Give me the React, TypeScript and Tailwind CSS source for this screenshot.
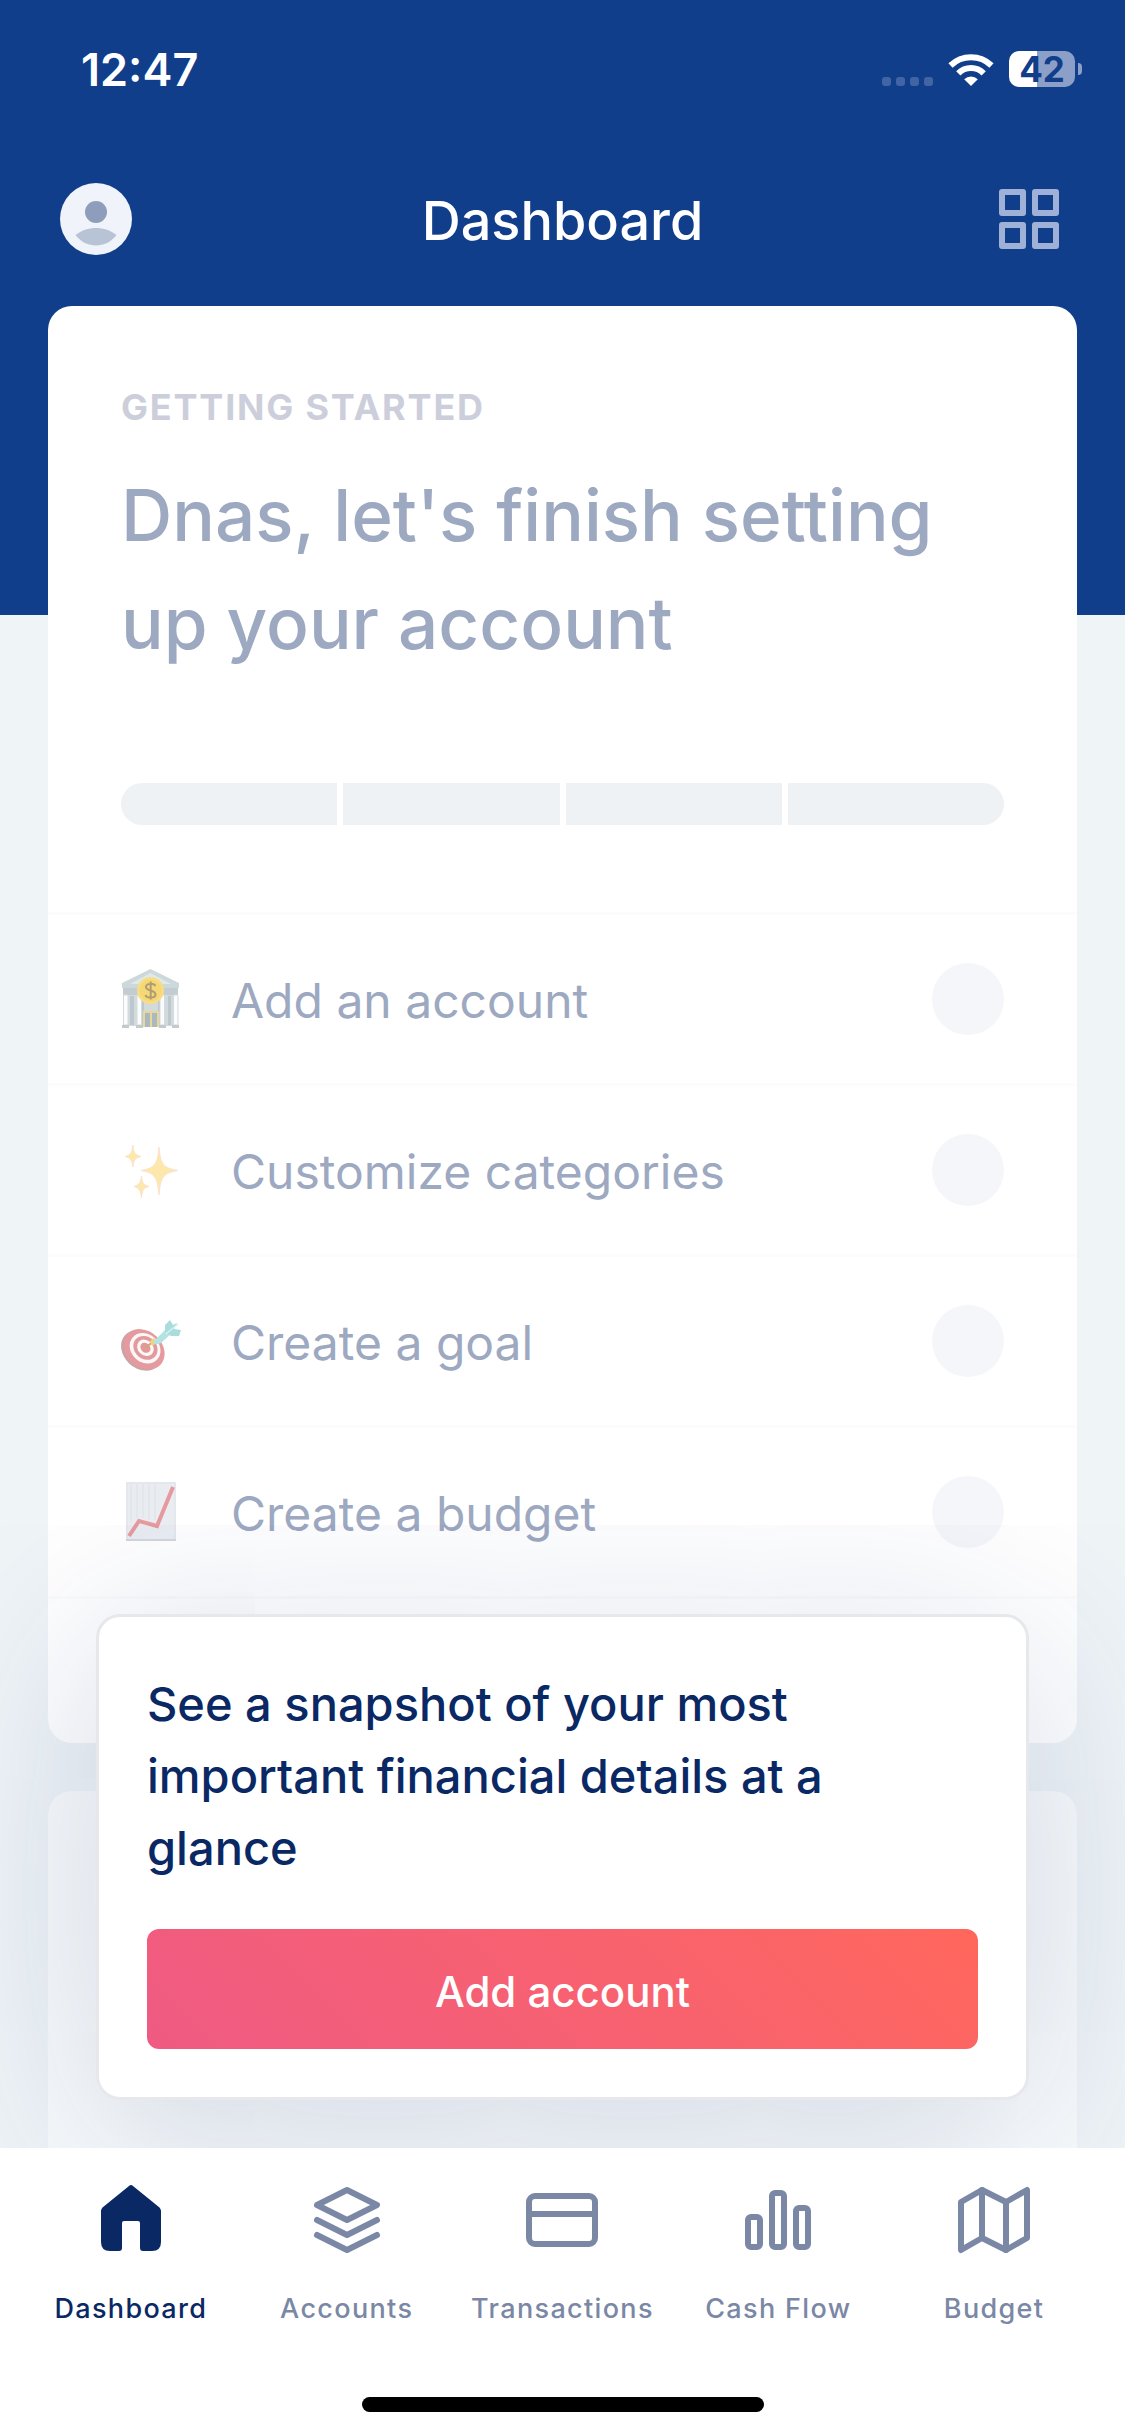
import React, { useState } from "react";

interface Task {
  label: string;
  icon: React.ReactNode;
}

interface Tab {
  label: string;
  icon: React.ReactNode;
}

function WifiIcon() {
  return <svg viewBox="0 0 46 33" className="h-[33px] w-[46px]" fill="none" stroke="white" strokeWidth="6">
      <path d="M2.5 12.5A29.500 29.500 0 0 1 43.500 12.500" />
      <path d="M10.300 20.300A18 18 0 0 1 35.700 20.300" />
      <path d="M23 33 16.200 26.200A10 10 0 0 1 29.800 26.200Z" fill="white" stroke="none" />
    </svg>;
}

function AvatarIcon() {
  return <svg viewBox="0 0 72 72" className="size-[72px]">
      <circle cx="36" cy="36" r="36" fill="#f0f3f9" />
      <circle cx="36" cy="29" r="11" fill="#8f9dbc" />
      <path d="M15.500 52C27 42.500 45 42.500 56.500 52C46 66 26 66 15.500 52Z" fill="#b8c3d5" />
    </svg>;
}

function GridIcon() {
  return <svg viewBox="0 0 60 60" className="size-[60px]" fill="none" stroke="#9fb1d6" strokeWidth="6" strokeLinejoin="round">
      <rect x="3" y="3" width="21" height="21" />
      <rect x="36" y="3" width="21" height="21" />
      <rect x="3" y="36" width="21" height="21" />
      <rect x="36" y="36" width="21" height="21" />
    </svg>;
}

function BankIcon() {
  return <svg viewBox="0 0 60 60" className="size-[60px]">
      <path d="M5 22H54V57H5Z" fill="#d3dadd" />
      <path d="M29.500 0 58 14V19H1V14Z" fill="#cdd8da" />
      <path d="M29.500 4 50 15H9Z" fill="#e0e9e9" />
      <path d="M2 19H57V26H2Z" fill="#c3cdd1" />
      <path d="M9 27H13V56H9ZM21 27H23V56H21ZM37 27H39V56H37ZM47 27H50V56H47Z" fill="#bcc8cd" />
      <g fill="#fbfcfd" stroke="#d5dadf" strokeWidth="1">
        <path d="M2.500 26H7V56H2.500ZM16 26H20.500V56H16ZM39 26H43.500V56H39ZM52.500 26H57V56H52.500Z" />
      </g>
      <path d="M22 42H38V58H22Z" fill="#e9d797" />
      <path d="M24 44H29V58H24ZM31 44H36V58H31Z" fill="#aab9c0" />
      <path d="M1 56H8V59H1ZM15 56H22V59H15ZM38 56H45V59H38ZM51 56H58V59H51Z" fill="#c3c9cd" />
      <circle cx="29.500" cy="21.500" r="13.500" fill="#f7dd84" />
      <circle cx="29.500" cy="21.500" r="11" fill="#f5d875" />
      <path d="M34.500 17C33 14 25 14 25 18C25 22.500 34.500 20.500 34.500 25.500C34.500 29.500 25.500 29.500 24.500 26M29.700 12.500V30.500" fill="none" stroke="#af9c74" strokeWidth="2" />
    </svg>;
}

function SparklesIcon() {
  return <svg viewBox="0 0 60 60" className="size-[60px]" fill="#fde8ac" stroke="#fce2cc" strokeWidth="1">
      <path d="M38 7C39.500 24 42 28 57 30.500C42 33 39.500 37 38 55C36.500 37 34 33 20 30.500C34 28 36.500 24 38 7Z" />
      <path d="M12 5C12.500 13 14 15 20 16.500C14 18 12.500 20 12 27C11 20 9.500 18 4 16.500C9.500 15 11 13 12 5Z" />
      <path d="M20.500 36C21 43 22.500 45 28 46.500C22.500 48 21 50 20.500 58C19.500 50 18 48 13 46.500C18 45 19.500 43 20.500 36Z" />
    </svg>;
}

function TargetIcon() {
  return <svg viewBox="0 0 60 60" className="size-[60px]">
      <g transform="rotate(43 22 38)">
        <ellipse cx="22" cy="40" rx="22.500" ry="18" fill="#c9a3a6" />
        <ellipse cx="23" cy="37.500" rx="22.500" ry="18" fill="#e59a9f" />
        <ellipse cx="23" cy="36" rx="16.500" ry="14" fill="#fdf8f8" />
        <ellipse cx="23" cy="35.500" rx="13" ry="11" fill="#e39a9e" />
        <ellipse cx="23" cy="35.500" rx="9" ry="7.500" fill="#fdf8f8" />
        <ellipse cx="23" cy="35.500" rx="5.500" ry="4.500" fill="#e09a98" />
      </g>
      <path d="M25 36 32 31" stroke="#d9a07c" strokeWidth="2" />
      <path d="M29 30 33 27 36 32 31 35Z" fill="#f3d37c" />
      <path d="M32 31 44 19 50 23 40 32Q34 35 32 31Z" fill="#b3e3e3" />
      <path d="M44 20 44 14 49 9 52 14 56 12 53 18 60 19 58 25 50 25Z" fill="#a9dcdc" />
      <path d="M45 23 57 13" stroke="#d5f1f0" strokeWidth="1.500" />
    </svg>;
}

function ChartIcon() {
  return <svg viewBox="0 0 60 60" className="size-[60px]">
      <path d="M5 0H55V59H5Z" fill="#e4e8ec" />
      <path d="M7 2H53V57H7Z" fill="#e9edf2" />
      <path d="M10 2V40M16 2V36M22 2V36M28 2V38M34 2V38" stroke="#dce1e8" strokeWidth="1" />
      <path d="M8 54 18 39 36 44 52 5" fill="none" stroke="#e69a9e" strokeWidth="4" />
      <path d="M5 58H55" stroke="#d3d7dc" strokeWidth="2" />
    </svg>;
}

function HomeIcon() {
  return <svg viewBox="0 0 72 72" className="size-[72px]" fill="currentColor">
      <path d="M34 2Q36 0 38 2L64.500 23.500Q66 25 66 27V58Q66 67 57 67H48Q45 67 45 64V39Q45 37 43 37H29Q27 37 27 39V64Q27 67 24 67H15Q6 67 6 58V27Q6 25 7.500 23.500Z" />
    </svg>;
}

function LineIcon({ children }: { children: React.ReactNode }) {
  return <svg viewBox="0 0 72 72" className="size-[72px]" fill="none" stroke="currentColor" strokeWidth="6" strokeLinecap="round" strokeLinejoin="round">
      {children}
    </svg>;
}

const tasks: Task[] = [
  { label: "Add an account", icon: <BankIcon /> },
  { label: "Customize categories", icon: <SparklesIcon /> },
  { label: "Create a goal", icon: <TargetIcon /> },
  { label: "Create a budget", icon: <ChartIcon /> }
];

const tabs: Tab[] = [
  { label: "Dashboard", icon: <HomeIcon /> },
  {
    label: "Accounts",
    icon: <LineIcon>
        <path d="M36 6 66 21 36 36 6 21Z" />
        <path d="M6 36 36 51 66 36" />
        <path d="M6 51 36 66 66 51" />
      </LineIcon>
  },
  {
    label: "Transactions",
    icon: <LineIcon>
        <rect x="3" y="12" width="66" height="48" rx="6" />
        <path d="M3 30H69" />
      </LineIcon>
  },
  {
    label: "Cash Flow",
    icon: <LineIcon>
        <rect x="6" y="33" width="12" height="30" rx="3" />
        <rect x="30" y="9" width="12" height="54" rx="3" />
        <rect x="54" y="24" width="12" height="39" rx="3" />
      </LineIcon>
  },
  {
    label: "Budget",
    icon: <LineIcon>
        <path d="M3 18 24 6 48 18 69 6V54L48 66 24 54 3 66Z" />
        <path d="M24 6V54M48 18V66" />
      </LineIcon>
  }
];

function StatusBar() {
  return <div className="flex h-[138px] items-center justify-between pr-[43px] pl-[81px]">
      <span className="text-[45px] leading-none font-semibold">12:47</span>
      <div className="flex items-center">
        <div className="mt-6 mr-[15px] flex gap-[5px]">
          {[0, 1, 2, 3].map(dot => <span key={dot} className="size-[9px] rounded-[3px] bg-[#4165a4]" />)}
        </div>
        <WifiIcon />
        <div className="ml-[15px] flex h-9 w-[66px] items-center justify-center rounded-[10px] bg-linear-to-r from-white from-42% to-[#8c9fc8] to-42% text-[35px] leading-none font-bold text-[#103e8b]">
          42
        </div>
        <span className="ml-[3px] h-3 w-1 rounded-r-full bg-[#8c9fc8]" />
      </div>
    </div>;
}

function GettingStarted() {
  return <section className="rounded-3xl bg-white pt-[77px] pb-36">
      <div className="px-[73px]">
        <h2 className="text-[36px] leading-[48px] font-bold tracking-wider text-[#cccfdb]">GETTING STARTED</h2>
        <p className="mt-[30px] text-[71px] leading-[108px] font-medium text-[#9da8c1]">
          Dnas, let's finish setting up your account
        </p>
        <div className="mt-[106px] grid h-[42px] grid-cols-4 gap-[6px] overflow-hidden rounded-full">
          {tasks.map(task => <span key={task.label} className="bg-[#eef2f5]" />)}
        </div>
      </div>
      <ul className="mt-[87px] border-t-3 border-[#fbfcfc]">
        {tasks.map(task => <li key={task.label} className="border-b-3 border-[#fbfcfc]">
            <button type="button" className="flex h-42 w-full items-center px-[73px] text-left">
              {task.icon}
              <span className="ml-[50px] flex-1 pt-1 text-[48px] leading-[60px] text-[#9da8c1]">{task.label}</span>
              <span className="size-[72px] rounded-full bg-[#f4f6fa]" />
            </button>
          </li>)}
      </ul>
    </section>;
}

function SnapshotPrompt() {
  return <div className="absolute inset-x-24 bottom-12 rounded-3xl border-3 border-[#e6e8ec] bg-white px-12 pt-[51px] pb-12 shadow-[0_32px_200px_rgba(20,45,110,0.2)]">
      <p className="text-[47px] leading-[72px] font-medium text-[#0a2864]">
        See a snapshot of your most important financial details at a glance
      </p>
      <button type="button" className="mt-[45px] h-30 w-full rounded-xl bg-linear-45 from-[#ef5a83] to-[#ff675c] pt-1 text-[42px] font-medium text-white">
        Add account
      </button>
    </div>;
}

function TabBar({ active, onSelect }: { active: string; onSelect: (label: string) => void }) {
  return <nav className="relative bg-white pt-9 pb-6">
      <div className="grid grid-cols-5 px-[23px]">
        {tabs.map(tab => <button key={tab.label} type="button" onClick={() => onSelect(tab.label)} className={`flex flex-col items-center gap-[35px] ${active === tab.label ? "text-[#0a2864]" : "text-[#7a87a5]"}`}>
            {tab.icon}
            <span className="text-[27px] leading-9 font-medium tracking-wider whitespace-nowrap">{tab.label}</span>
          </button>)}
      </div>
      <div className="mx-auto mt-[70px] h-[15px] w-[402px] rounded-full bg-black" />
    </nav>;
}

export default function App() {
  const [active, setActive] = useState("Dashboard");
  return <div className="flex min-h-screen flex-col overflow-hidden bg-[#eff4f7] font-['Inter',sans-serif]">
      <header className="bg-[#103e8b] pb-[360px] text-white">
        <StatusBar />
        <div className="flex items-center justify-between px-[60px] pt-[45px]">
          <button type="button" aria-label="Profile">
            <AvatarIcon />
          </button>
          <h1 className="pt-1 text-[54px] leading-[68px] font-medium">Dashboard</h1>
          <button type="button" aria-label="Widgets" className="flex w-[72px] justify-center">
            <GridIcon />
          </button>
        </div>
      </header>
      <main className="relative -mt-[309px] flex flex-1 flex-col gap-12 px-12">
        <GettingStarted />
        <section className="min-h-[357px] flex-1 rounded-t-3xl bg-white/60" />
        <SnapshotPrompt />
      </main>
      <TabBar active={active} onSelect={setActive} />
    </div>;
}
